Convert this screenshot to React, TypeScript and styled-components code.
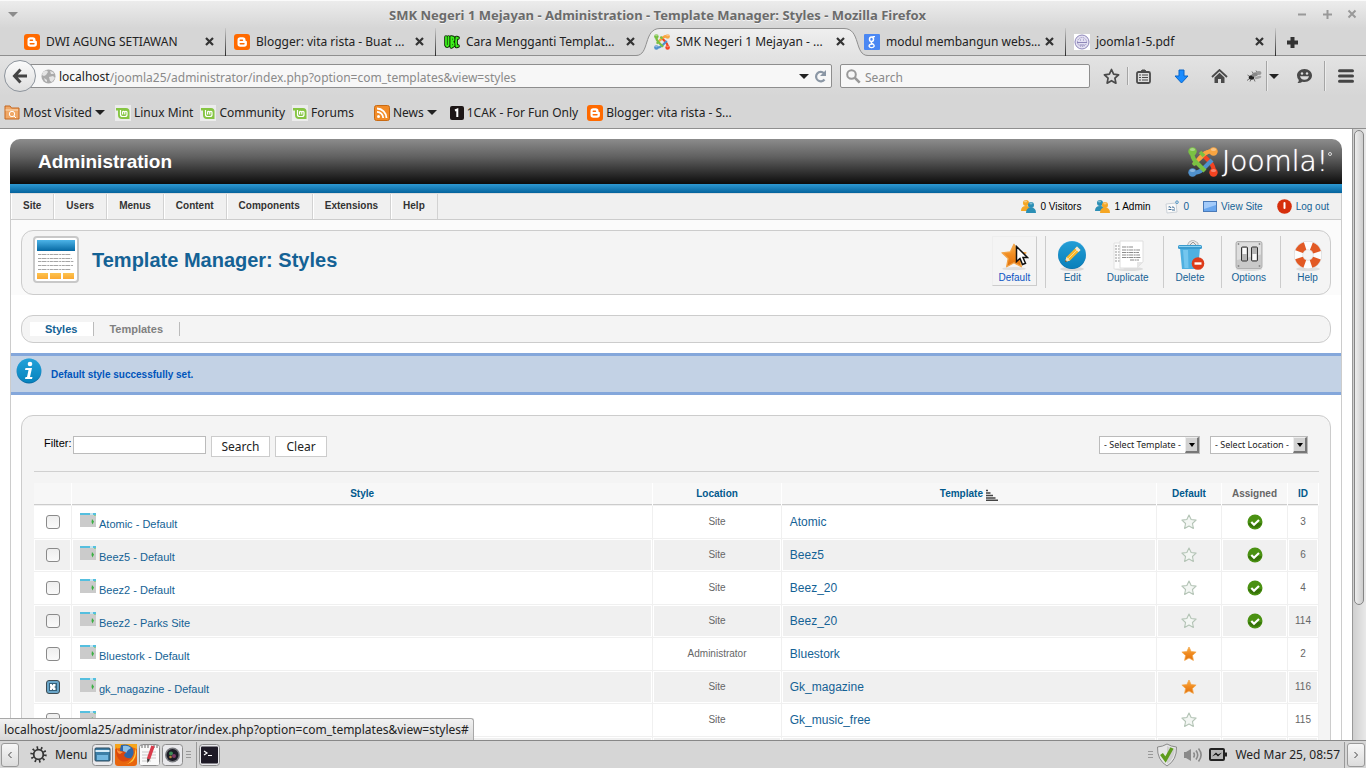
import React from 'react';
import styled, { createGlobalStyle, css } from 'styled-components';

const ui = '"Noto Sans", "Open Sans", sans-serif';
const web = '"Liberation Sans", Arial, sans-serif';

const Global = createGlobalStyle`
  * { box-sizing: border-box; }
  html, body { margin: 0; padding: 0; background: #d6d6d6; }
  a { text-decoration: none; color: inherit; }
  button, input, select { font: inherit; color: inherit; margin: 0; }
  button { background: none; border: 0; padding: 0; }
  svg { display: block; flex: none; }
`;

/* ---------- Window chrome ---------- */

const Desktop = styled.div`
  display: flex;
  flex-direction: column;
  height: 100vh;
  overflow: hidden;
  font-family: ${ui};
  font-size: 12px;
  line-height: 18px;
  color: #222;
`;

const TitleBar = styled.header`
  display: flex;
  align-items: center;
  height: 28px;
  padding: 0 8px;
  background: linear-gradient(#ececec, #d6d6d6);
  border-top: 1px solid #fafafa;
  color: #6b6b6b;
`;

const WindowTitle = styled.h1`
  flex: 1;
  margin: 0;
  font-size: 13px;
  line-height: 20px;
  font-weight: 700;
  text-align: center;
  text-shadow: 0 1px 0 #f4f4f4;
`;

const WindowButtons = styled.div`
  display: flex;
  gap: 14px;
`;

const TabStrip = styled.nav`
  display: flex;
  height: 28px;
  padding-left: 16px;
  background: #d6d6d6;
  box-shadow: inset 0 -1px 0 #8f8f8f;
`;

const TabBox = styled.div<{ $line?: boolean }>`
  position: relative;
  display: flex;
  align-items: center;
  gap: 6px;
  width: 210px;
  padding: 0 11px 1px 8px;
  ${p => p.$line && css`
    border-right: 1px solid;
    border-image: linear-gradient(#d0d0d0, #222) 1;
  `}
`;

const TabShape = styled.svg`
  position: absolute;
  top: 0;
  left: -10px;
`;

const TabLink = styled.a`
  position: relative;
  display: flex;
  align-items: center;
  gap: 6px;
  flex: 1;
  min-width: 0;
  white-space: nowrap;
`;

const CloseButton = styled.button`
  position: relative;
  display: flex;
`;

const NewTab = styled.button`
  display: flex;
  align-items: center;
  padding-left: 11px;
`;

const NavBar = styled.div`
  display: flex;
  align-items: center;
  height: 40px;
  padding: 0 12px 0 4px;
  background: linear-gradient(#e3e3e3, #d6d6d6);
`;

const BackButton = styled.button`
  position: relative;
  z-index: 1;
  display: flex;
  align-items: center;
  justify-content: center;
  flex: none;
  width: 32px;
  height: 32px;
  border: 1px solid #8d949c;
  border-radius: 50%;
  background: linear-gradient(#fbfbfb, #dedede);
`;

const UrlField = styled.div`
  display: flex;
  align-items: center;
  flex: 1;
  height: 24px;
  margin-left: -16px;
  padding: 0 4px 0 20px;
  border: 1px solid #8e8e8e;
  border-radius: 0 2px 2px 0;
  background: #f7f7f7;
`;

const Host = styled.label`
  margin-left: 3px;
  padding-top: 2px;
  color: #222;
`;

const BareInput = styled.input`
  flex: 1;
  min-width: 0;
  height: 20px;
  padding: 2px 0 0;
  border: 0;
  outline: 0;
  background: transparent;
  color: #8a8a8a;
  &::placeholder { color: #8a8a8a; opacity: 1; }
`;

const SearchField = styled.label`
  display: flex;
  align-items: center;
  gap: 4px;
  width: 250px;
  height: 24px;
  margin: 0 13px 0 8px;
  padding: 0 5px;
  border: 1px solid #8e8e8e;
  border-radius: 2px;
  background: #f7f7f7;
`;

const NavTools = styled.div`
  display: flex;
  align-items: center;
`;

const ToolButton = styled.button<{ $gap?: number }>`
  display: flex;
  justify-content: center;
  margin-left: ${p => p.$gap ?? 0}px;
`;

const ToolLine = styled.i<{ $tall?: boolean; $gap: number }>`
  width: 1px;
  height: ${p => (p.$tall ? 30 : 18)}px;
  margin-left: ${p => p.$gap}px;
  background: #a5a5a5;
  box-shadow: 1px 0 0 #ececec;
`;

const Bookmarks = styled.nav`
  display: flex;
  align-items: center;
  height: 33px;
  padding: 1px 4px 0;
  background: #d6d6d6;
  border-bottom: 1px solid #8f8f8f;
`;

const Bookmark = styled.a<{ $before?: number }>`
  display: flex;
  align-items: center;
  gap: 3px;
  margin-left: ${p => p.$before ?? 0}px;
  white-space: nowrap;
`;

const Caret = styled.i<{ $dim?: boolean }>`
  border: solid transparent;
  border-width: 5px 5px 0;
  border-top-color: ${p => (p.$dim ? '#8c8c8c' : '#222')};
`;

/* ---------- Web page ---------- */

const Viewport = styled.div`
  position: relative;
  display: flex;
  flex: 1;
  min-height: 0;
  overflow: hidden;
  background: #fff;
`;

const Document = styled.main`
  flex: 1;
  min-width: 0;
  padding: 10px 10px 0;
  font-family: ${web};
  font-size: 11px;
  line-height: 14px;
`;

const Scrollbar = styled.div`
  width: 14px;
  padding: 1px 1px;
  border-left: 1px solid #999;
  background: linear-gradient(90deg, #cfcfcf, #e9e9e9);
`;

const Thumb = styled.div`
  width: 10px;
  height: 78%;
  border: 1px solid #858585;
  border-radius: 5px;
  background: linear-gradient(90deg, #ececec, #cdcdcd);
`;

const Banner = styled.header`
  display: flex;
  align-items: center;
  justify-content: space-between;
  height: 45px;
  padding: 0 10px 0 28px;
  border-radius: 10px 10px 0 0;
  background: linear-gradient(#8c8c8c, #606060 40%, #0c0c0c);
`;

const BlueStripe = styled.div`
  height: 9px;
  background: linear-gradient(#2d98d2, #04639d);
`;

const SiteName = styled.h2`
  margin: 0;
  color: #fff;
  font-size: 19px;
  line-height: 24px;
`;

const Brand = styled.div`
  display: flex;
  align-items: center;
  gap: 4px;
  color: #fff;
  font-family: "DejaVu Sans Light", "DejaVu Sans", sans-serif;
  font-weight: 200;
  font-size: 28px;
  line-height: 30px;
  text-shadow: 0 0 1px #fff;
`;

const Registered = styled.i`
  width: 4px;
  height: 4px;
  margin: -16px 0 0 -4px;
  border: 1px solid #ddd;
  border-radius: 50%;
`;

const Frame = styled.div`
  border: solid #ccc;
  border-width: 0 1px;
`;

const MenuRow = styled.div`
  display: flex;
  justify-content: space-between;
  height: 27px;
  padding-right: 12px;
  border-top: 1px solid #ddd;
  border-bottom: 1px solid #ccc;
  background: #f0f0f0;
`;

const MainMenu = styled.nav`
  display: flex;
`;

const MenuItem = styled.a`
  display: flex;
  align-items: center;
  padding: 0 12px 2px 11px;
  border-left: 1px solid #fff;
  border-right: 1px solid #d2d2d2;
  color: #333;
  font-size: 10px;
  font-weight: 700;
`;

const Status = styled.div`
  display: flex;
  align-items: center;
  gap: 14px;
  color: #000;
  font-size: 10px;
`;

const StatusItem = styled.span`
  display: flex;
  align-items: center;
  gap: 4px;
  a { color: #146295; }
`;

const TitleZone = styled.section`
  padding: 10px 10px 0;
  background: #fbfbfb;
`;

const Panel = styled.section`
  border: 1px solid #ccc;
  border-radius: 12px;
  background: #f4f4f4;
`;

const TitlePanel = styled(Panel)`
  display: flex;
  justify-content: space-between;
  height: 65px;
  padding: 5px 0 0 11px;
`;

const PageTitle = styled.h2`
  display: flex;
  gap: 13px;
  margin: 0;
  color: #146295;
  font-size: 20px;
  line-height: 48px;
`;

const Toolbar = styled.div`
  display: flex;
`;

const ToolGroup = styled.div`
  display: flex;
  gap: 6px;
  height: 52px;
  padding: 0 8px 0 4px;
  border-right: 1px solid #ccc;
  &:last-child { padding-right: 0; border-right: 0; }
`;

const Action = styled.a<{ $hover?: boolean }>`
  position: relative;
  display: flex;
  flex-direction: column;
  align-items: center;
  min-width: 45px;
  height: 50px;
  padding: 3px 5px 0;
  border: 1px solid transparent;
  color: #146295;
  font-size: 10px;
  line-height: 12px;
  ${p => p.$hover && css`
    border-color: #eee #ccc #ccc #eee;
    color: #0b55c4;
  `}
`;

const Pointer = styled.svg`
  position: absolute;
  left: 22px;
  top: 8px;
`;

const SubMenu = styled(Panel)`
  display: flex;
  align-items: center;
  height: 28px;
  margin: 20px 10px 10px;
  padding-left: 8px;
`;

const SubItem = styled.a<{ $on?: boolean }>`
  padding: 0 16px 0 15px;
  border-right: 1px solid #bbb;
  color: ${p => (p.$on ? '#146295' : '#808080')};
  background: ${p => (p.$on ? '#fff' : 'transparent')};
  font-weight: 700;
`;

const Message = styled.section`
  display: flex;
  gap: 9px;
  height: 42px;
  padding: 2px 5px 0;
  border: solid #84a7db;
  border-width: 3px 0;
  background: #c3d2e5;
  color: #05b;
  font-size: 10px;
  font-weight: 700;
  line-height: 34px;
`;

const ListPanel = styled(Panel)`
  margin: 20px 10px 0;
  padding: 20px 11px 40px 12px;
`;

const Filters = styled.form`
  display: flex;
  align-items: flex-start;
  height: 36px;
  margin-bottom: 11px;
  padding: 0 11px 0 10px;
  border-bottom: 1px solid #d0d0d0;
  color: #000;
`;

const FilterInput = styled.input`
  width: 133px;
  height: 18px;
  margin: 0 5px 0 1px;
  padding: 0 3px;
  border: 1px solid #bbb;
  background: #fff;
`;

const FilterButton = styled.button`
  height: 21px;
  margin-right: 5px;
  padding: 0 10px;
  border: 1px solid #ccc;
  background: #fff;
  color: #222;
  font-family: ${ui};
  font-size: 12px;
  line-height: 18px;
`;

const SelectGroup = styled.div`
  display: flex;
  gap: 10px;
  margin-left: auto;
`;

const SelectBox = styled.label`
  position: relative;
  display: flex;
  border: 1px solid #bbb;
  background: #fff;
`;

const Select = styled.select`
  appearance: none;
  height: 16px;
  padding: 0 18px 0 4px;
  border: 0;
  background: transparent;
  color: #222;
  font-family: ${ui};
  font-size: 9px;
  line-height: 14px;
`;

const SelectArrow = styled.i`
  position: absolute;
  top: 0;
  right: 0;
  display: flex;
  align-items: center;
  justify-content: center;
  width: 14px;
  height: 16px;
  border: 1px solid;
  border-width: 1px 2px 2px 1px;
  border-color: #eee #777 #777 #eee;
  background: #d2d2d2;
  pointer-events: none;
  &::after {
    content: '';
    border: solid transparent;
    border-width: 4px 3px 0;
    border-top-color: #000;
  }
`;

const Grid = styled.table`
  width: 100%;
  table-layout: fixed;
  border-collapse: separate;
  border-spacing: 0;
`;

const Head = styled.th<{ $plain?: boolean }>`
  height: 23px;
  padding: 0;
  border-right: 1px solid #fff;
  border-bottom: 1px solid #f0f0f0;
  background: #f7f7f7;
  box-shadow: inset 0 -1px 0 #ccc;
  color: ${p => (p.$plain ? '#666' : '#025a8d')};
  font-size: 10px;
  svg { display: inline-block; vertical-align: -4px; margin-left: 3px; }
`;

const Row = styled.tr`
  background: #fff;
  &:nth-child(even) { background: #f0f0f0; }
`;

const Cell = styled.td<{ $left?: boolean; $big?: boolean }>`
  height: 33px;
  padding: ${p => (p.$left ? '0 8px' : '0')};
  border-right: 1px solid #f0f0f0;
  border-bottom: 1px solid #f0f0f0;
  box-shadow: inset 0 0 0 1px #fff;
  color: #666;
  font-size: ${p => (p.$big ? 12 : 10)}px;
  text-align: ${p => (p.$left ? 'left' : 'center')};
  a { color: #146295; }
  svg { margin: 0 auto; }
`;

const StyleName = styled.div`
  display: flex;
  align-items: flex-start;
  gap: 3px;
  height: 18px;
  font-size: 11px;
  a { margin-top: 4px; }
  svg { margin: 0; }
`;

const Check = styled.input`
  position: relative;
  display: block;
  appearance: none;
  width: 14px;
  height: 14px;
  margin: 0 auto;
  border: 1px solid #8a8a8a;
  border-radius: 3px;
  background: linear-gradient(#eee, #fafafa);
  &:checked {
    border-color: #3e4b52;
    background: #69a5c8;
  }
  &:checked::before {
    content: '';
    position: absolute;
    inset: 2px;
    background: #34607a;
  }
  &:checked::after {
    content: '';
    position: absolute;
    inset: 3px;
    background: #fff;
    clip-path: polygon(0 0, 38% 0, 50% 25%, 62% 0, 100% 0, 100% 38%, 75% 50%, 100% 62%, 100% 100%, 62% 100%, 50% 75%, 38% 100%, 0 100%, 0 62%, 25% 50%, 0 38%);
  }
`;

const LinkHint = styled.div`
  position: absolute;
  left: 0;
  bottom: 0;
  height: 22px;
  padding: 1px 4px 0;
  border: solid #a8a8a8;
  border-width: 1px 1px 0 0;
  border-radius: 0 3px 0 0;
  background: linear-gradient(#f2f2f2, #d8d8d8);
  line-height: 20px;
`;

/* ---------- Desktop panel ---------- */

const TaskBar = styled.footer`
  display: flex;
  align-items: center;
  justify-content: space-between;
  height: 28px;
  padding: 0 1px;
  border-top: 1px solid #888;
  background: #d6d6d6;
`;

const TaskSide = styled.div`
  display: flex;
  align-items: center;
`;

const Tray = styled.div`
  display: flex;
  align-items: center;
  gap: 6px;
`;

const HideButton = styled.button`
  display: flex;
  align-items: center;
  justify-content: center;
  width: 18px;
  height: 24px;
  border: 1px solid #999;
  border-radius: 3px;
  background: linear-gradient(#f6f6f6, #dcdcdc);
`;

const MenuButton = styled.button`
  display: flex;
  align-items: center;
  gap: 8px;
  margin: 0 5px 0 11px;
`;

const Launcher = styled.button`
  display: flex;
  margin-right: 2px;
`;

const Grip = styled.i`
  width: 5px;
  height: 8px;
  margin: 0 3px 0 1px;
  background: repeating-linear-gradient(#999 0 1px, transparent 1px 3px);
`;

const PanelLine = styled.i`
  width: 1px;
  height: 26px;
  margin: 0 2px;
  background: #999;
`;

const Clock = styled.time`
  margin: 0 2px;
`;

/* ---------- Icons ---------- */

const BloggerIcon = () => (
  <svg width="16" height="16" viewBox="0 0 16 16">
    <rect width="16" height="16" rx="3" fill="#ff6a00" />
    <path d="M3.500 6A2.700 2.700 0 0 1 6.200 3.300h2.600A2.700 2.700 0 0 1 11.500 6c0 .8.3 1 .8 1 .4 0 .6.3.6.7V10a2.700 2.700 0 0 1-2.700 2.700h-4A2.700 2.700 0 0 1 3.500 10z" fill="#fff" />
    <path d="M6.200 6.200h2.300M6.200 9.700h3.800" stroke="#ff6a00" strokeWidth="1.400" strokeLinecap="round" />
  </svg>
);

const UbcIcon = () => (
  <svg width="16" height="16" viewBox="0 0 16 16" fill="none" strokeLinejoin="round" strokeLinecap="round">
    <g stroke="#0a2a00" strokeWidth="3.600"><path d="M2 3v8q1 2.500 2.500 0V3M7.300 3v10l2.300-1.500V9.500L8 8l1.600-2-.3-2.500zM14 4l-1.500-.5-.5 4.500.5 4.500 1.500-.5" /></g>
    <g stroke="#3df01c" strokeWidth="1.800"><path d="M2 3v8q1 2.500 2.500 0V3M7.300 3v10l2.300-1.500V9.500L8 8l1.600-2-.3-2.500zM14 4l-1.500-.5-.5 4.500.5 4.500 1.500-.5" /></g>
  </svg>
);

const JoomlaMark = ({ size }: { size: number }) => (
  <svg width={size} height={size} viewBox="0 0 30 30" fill="none" strokeWidth="4.200">
    <path d="M26 4Q19 4 15 8L6 17" stroke="#f9a541" />
    <path d="M26 26Q26 19 22 15L13 6" stroke="#f44321" />
    <path d="M4 26Q11 26 15 22L24 13" stroke="#5091cd" />
    <path d="M4 4Q4 11 8 15L17 24" stroke="#7ac143" />
    <path d="M26 4Q19 4 15 8L11 12" stroke="#f9a541" />
    <path d="m5 18 4-4M12 5l4 4" stroke="#7ac143" strokeWidth="3.600" />
    <g stroke="none">
      <circle cx="4.500" cy="4.500" r="4.200" fill="#7ac143" /><circle cx="25.500" cy="4.500" r="4.200" fill="#f9a541" />
      <circle cx="25.500" cy="25.500" r="4.200" fill="#f44321" /><circle cx="4.500" cy="25.500" r="4.200" fill="#5091cd" />
      <g fill="#fff" opacity=".35"><ellipse cx="4.500" cy="2.600" rx="2.600" ry="1.500" /><ellipse cx="25.500" cy="2.600" rx="2.600" ry="1.500" /><ellipse cx="25.500" cy="23.600" rx="2.600" ry="1.500" /><ellipse cx="4.500" cy="23.600" rx="2.600" ry="1.500" /></g>
    </g>
  </svg>
);

const GoogleIcon = () => (
  <svg width="16" height="16" viewBox="0 0 16 16" fill="none" stroke="#fff">
    <rect width="16" height="16" rx="1" fill="#4a87f3" stroke="none" />
    <ellipse cx="7.500" cy="5.200" rx="2" ry="2.300" strokeWidth="1.500" />
    <path d="M8.500 2.700H11M9 7Q6 8.500 8 9.300T10.300 12Q9.500 13.800 7.500 13.700T5 12Q5.300 10 8.500 10" strokeWidth="1.300" />
  </svg>
);

const SealIcon = () => (
  <svg width="16" height="16" viewBox="0 0 16 16" fill="none" stroke="#8d86b8">
    <rect width="16" height="16" fill="#fff" stroke="none" />
    <circle cx="8" cy="8" r="7" fill="#e4e1f2" />
    <circle cx="8" cy="8" r="4.500" strokeDasharray="1 1" />
    <path d="M3 8.500h10M6 6h1M9 6h1M5.500 11h5" />
  </svg>
);

const CloseIcon = () => (
  <svg width="9" height="9" viewBox="0 0 9 9" stroke="#333" strokeWidth="2.200"><path d="m1 1 7 7M8 1 1 8" /></svg>
);

const BackIcon = () => (
  <svg width="16" height="16" viewBox="0 0 16 16" fill="none" stroke="#444" strokeWidth="3"><path d="M8.500 1.500 2.500 8l6 6.500M3 8h12" /></svg>
);

const GlobeIcon = () => (
  <svg width="15" height="15" viewBox="0 0 15 15">
    <circle cx="7.500" cy="7.500" r="7" fill="#aaa" />
    <path d="M2 3q4-3 5 0L5 6 3 7 1 6zM8 8l4-1 2 2-3 4-2-1zM9 2l3 1 1 2-3 0zM3 9l3 2v2l-2-1z" fill="#e4e4e4" />
  </svg>
);

const ReloadIcon = () => (
  <svg width="13" height="13" viewBox="0 0 13 13" fill="none" stroke="#8b97a5" strokeWidth="2.200">
    <path d="M10.500 9.500A4.700 4.700 0 1 1 10 3.200" /><path d="M12 0v6H6z" fill="#8b97a5" stroke="none" />
  </svg>
);

const MagnifierIcon = () => (
  <svg width="15" height="15" viewBox="0 0 15 15" fill="none" stroke="#999" strokeWidth="2">
    <circle cx="5.500" cy="5.500" r="4.300" /><path d="m8.700 8.700 5 5" strokeWidth="2.600" />
  </svg>
);

const StarOutline = () => (
  <svg width="17" height="17" viewBox="0 0 17 17" fill="none" stroke="#4a4a4a" strokeWidth="1.700" strokeLinejoin="round">
    <path d="m8.500 1.500 2.100 4.700 5 .6-3.700 3.400 1 5-4.400-2.500-4.400 2.500 1-5L1.400 6.800l5-.6z" />
  </svg>
);

const ClipboardIcon = () => (
  <svg width="15" height="15" viewBox="0 0 15 15" fill="none" stroke="#4a4a4a" strokeWidth="1.800">
    <rect x="1" y="3" width="13" height="11" rx="1.500" />
    <path d="M4.500 3 6 1h3l1.500 2" fill="#4a4a4a" strokeWidth="1" />
    <path d="M3 6h2M3 8.500h2M3 11h2M6 6h6M6 8.500h6M6 11h6" strokeWidth="1.200" />
  </svg>
);

const DownloadIcon = () => (
  <svg width="15" height="15" viewBox="0 0 15 15"><path d="M5 1h5v6h4l-6.500 7L1 7h4z" fill="#1a8cff" stroke="#0865c8" /></svg>
);

const HomeIcon = () => (
  <svg width="17" height="15" viewBox="0 0 17 15" fill="#4a4a4a">
    <path d="m1 8 7.500-7L16 8" fill="none" stroke="#4a4a4a" strokeWidth="1.800" />
    <path d="m3.500 8.500 5-4.700 5 4.700V14h-3.500v-4H7v4H3.500z" />
  </svg>
);

const FlyIcon = () => (
  <svg width="17" height="14" viewBox="0 0 17 14" fill="none" stroke="#555">
    <ellipse cx="5.500" cy="8.500" rx="2.700" ry="2.200" fill="#222" stroke="none" />
    <ellipse cx="9" cy="5.500" rx="3.500" ry="2" fill="#888" stroke="none" transform="rotate(-20 9 5.500)" />
    <ellipse cx="13" cy="4" rx="2.500" ry="2" fill="#999" stroke="none" />
    <ellipse cx="12" cy="8.500" rx="3.500" ry="1.300" fill="#a6a6a6" stroke="none" transform="rotate(-15 12 8.500)" />
    <path d="M3 7 1.500 6M3 10l-2 1.500M5 10.500l-1 2M8 10l1 2.500M7 4 6 2.500M11 3l-1-1.500" strokeWidth=".8" />
  </svg>
);

const SmileIcon = () => (
  <svg width="17" height="16" viewBox="0 0 17 16">
    <path d="M8.500 1C13 1 16 4 16 7.500S13 14 8.500 14q-1 0-2-.3Q4 15.500 1.500 15q1.500-1.300 1.300-3Q1 10 1 7.500C1 4 4 1 8.500 1z" fill="#4a4a4a" />
    <circle cx="6" cy="5.500" r="1.200" fill="#ddd" /><circle cx="11" cy="5.500" r="1.200" fill="#ddd" />
    <path d="M4 8.300h9q-1 3.500-4.500 3.500T4 8.300z" fill="#ddd" />
  </svg>
);

const HamburgerIcon = () => (
  <svg width="16" height="14" viewBox="0 0 16 14" stroke="#444" strokeWidth="3" strokeLinecap="round"><path d="M1.500 1.800h13M1.500 7h13M1.500 12.200h13" /></svg>
);

const FolderIcon = () => (
  <svg width="16" height="15" viewBox="0 0 16 15" fill="none" stroke="#c4661f">
    <path d="M1 14V1h5l1.500 2H15v11z" fill="#f0a868" />
    <path d="M1.500 5H14" stroke="#fbe0c0" />
    <circle cx="8" cy="9" r="2.700" stroke="#fff" /><path d="m10 11 2 2" stroke="#fff" />
  </svg>
);

const MintIcon = () => (
  <svg width="16" height="16" viewBox="0 0 16 16" fill="none">
    <rect width="16" height="16" fill="#ececec" />
    <path d="M1 3h10q3.500 0 3.500 3.500V14H7q-4 0-4-4V5.500H1z" fill="#86c543" />
    <path d="M5.500 5v4.500q0 2 2 2H10q2 0 2-2V7.300q0-1-1.100-1t-1.100 1V9.500M9.800 7.300q0-1-1.100-1t-1.100 1V9.500" stroke="#fff" strokeWidth="1.200" />
  </svg>
);

const RssIcon = () => (
  <svg width="16" height="16" viewBox="0 0 16 16" fill="none" stroke="#fff" strokeWidth="1.800">
    <rect x=".5" y=".5" width="15" height="15" rx="2" fill="#f28c28" stroke="#c96a12" strokeWidth="1" />
    <circle cx="4.500" cy="11.500" r="1.500" fill="#fff" stroke="none" />
    <path d="M3 6.800A6.200 6.200 0 0 1 9.200 13M3 3.500A9.500 9.500 0 0 1 12.500 13" />
  </svg>
);

const OneIcon = () => (
  <svg width="14" height="14" viewBox="0 0 14 14" fill="none">
    <rect width="14" height="14" rx="2" fill="#1d1616" /><path d="M5 4.500 7.300 3.500V11" stroke="#fff" strokeWidth="2" />
  </svg>
);

const PeopleIcon = ({ back, front }: { back: string; front: string }) => (
  <svg width="15" height="15" viewBox="0 0 15 15">
    <g fill={back}><circle cx="5" cy="4" r="3" /><path d="M0 12q0-5 5-5t4 5z" /></g>
    <g fill={front}><circle cx="10" cy="6" r="3" /><path d="M5 14q0-5.500 5-5.500t5 5.500z" /></g>
    <g fill="#fff" opacity=".4"><ellipse cx="10" cy="4.500" rx="1.600" ry="1" /><ellipse cx="4.500" cy="2.500" rx="1.600" ry="1" /></g>
  </svg>
);

const MailIcon = () => (
  <svg width="15" height="14" viewBox="0 0 15 14" fill="none">
    <path d="m1 4 10-1 1 9-10 1z" fill="#fafafa" stroke="#ccd2d8" />
    <path d="M3.500 7q2-1 2.500 1M3.500 9.500h3M7 7q2-.5 2.500 1.500M7 10h3" stroke="#3b6a94" />
    <circle cx="12" cy="2.200" r="1.300" stroke="#4f94c4" />
  </svg>
);

const ScreenIcon = () => (
  <svg width="14" height="11" viewBox="0 0 14 11">
    <rect x=".5" y=".5" width="13" height="10" fill="#6aa7ee" stroke="#4a7ab8" />
    <path d="M1 1h12v3L1 8z" fill="#a3cbfa" />
  </svg>
);

const PowerIcon = () => (
  <svg width="15" height="15" viewBox="0 0 15 15"><circle cx="7.500" cy="7.500" r="7.300" fill="#d62f0c" /><path d="M7.500 4v5" stroke="#fff" strokeWidth="2" strokeLinecap="round" /></svg>
);

const LayoutIcon = () => (
  <svg width="46" height="47" viewBox="0 0 46 47">
    <defs>
      <linearGradient id="sky" x2="0" y2="1"><stop stopColor="#4db4e8" /><stop offset="1" stopColor="#0568a2" /></linearGradient>
      <linearGradient id="sun" x2="0" y2="1"><stop stopColor="#fdc34f" /><stop offset="1" stopColor="#fba932" /></linearGradient>
    </defs>
    <rect x="1" y="1" width="44" height="45" rx="3" fill="#fff" stroke="#c8c8c8" strokeWidth="2" />
    <rect x="4" y="4" width="38" height="11" fill="url(#sky)" />
    <g stroke="#a5a5a5" strokeDasharray="3 .5 5 .8 2 .6">
      <path d="M5 18.500h33M5 22.500h34M5 25.500h36M5 29.500h35M5 33.500h33" />
    </g>
    <g fill="url(#sun)"><rect x="4" y="37" width="11" height="6" /><rect x="17" y="37" width="11" height="6" /><rect x="30" y="37" width="11" height="6" /></g>
  </svg>
);

const star = 'm16 2 4.300 9 9.900 1.200-7.300 6.800 1.900 9.800L16 24l-8.800 4.800 1.900-9.800-7.300-6.800L11.700 11z';

const GoldStar = ({ size, inset = 0 }: { size: number; inset?: number }) => (
  <svg width={size} height={size} viewBox={`${-inset} ${-inset} ${32 + 2 * inset} ${32 + 2 * inset}`}>
    <defs><linearGradient id="gold" x2="0" y2="1"><stop stopColor="#f9b04d" /><stop offset=".5" stopColor="#f08a1f" /><stop offset="1" stopColor="#e0700c" /></linearGradient></defs>
    {inset > 0 && <ellipse cx="16" cy="31" rx="14" ry="2" fill="#dedede" />}
    <path d={star} fill="url(#gold)" stroke="#f3a548" strokeWidth="1.500" strokeLinejoin="round" />
  </svg>
);

const PaleStar = () => (
  <svg width="16" height="16" viewBox="0 0 32 32"><path d={star} fill="#f3f6f3" stroke="#b4c4b6" strokeWidth="2.200" strokeLinejoin="round" /></svg>
);

const EditIcon = () => (
  <svg width="32" height="32" viewBox="0 0 32 32">
    <ellipse cx="16" cy="29" rx="12" ry="2" fill="#d9d9d9" />
    <circle cx="16" cy="15" r="14" fill="url(#sky)" /><circle cx="16" cy="15" r="13.500" fill="#0a8fc9" opacity=".6" />
    <path d="m9 22 1.500-5L21 6.500l3.500 3.500L14 20.500z" fill="#f7b52c" />
    <path d="m19 8.500 2-2 3.500 3.500-2 2z" fill="#f2ebe0" /><path d="m9 22 1.500-5 3.500 3.500z" fill="#f8e3bb" /><path d="m12 19 9-9" stroke="#fde08a" />
    <path d="m9 22 .6-2 1.400 1.400z" fill="#333" />
  </svg>
);

const DuplicateIcon = () => (
  <svg width="32" height="32" viewBox="0 0 32 32">
    <ellipse cx="17" cy="29" rx="14" ry="2" fill="#dcdcdc" />
    <path d="M2 3h10v26H2z" fill="#fcfcfc" stroke="#e2e2e2" />
    <path d="M3 6h5M3 9h5M3 12h5M3 15h5M3 18h5M3 21h5" stroke="#999" strokeDasharray="2 1" />
    <path d="M8 1h23v21l-6 6H8z" fill="#fff" stroke="#dedede" />
    <path d="M10 7h11M10 10h18M10 12.500h17M10 15h18M10 17.500h19M18 20h9" stroke="#8b8b8b" strokeWidth="1.200" strokeDasharray="4 .6 2 .5" />
    <path d="m25 28 0-6h6z" fill="#e6e6e6" />
  </svg>
);

const DeleteIcon = () => (
  <svg width="32" height="32" viewBox="0 0 32 32">
    <path d="m6 8 2 21h16l2-21z" fill="#4fb0e0" /><path d="m9 10 1.500 18h4L14 10z" fill="#74c6ee" />
    <path d="M13 6q1-5 6-6l5 3v3z" fill="#e8e8e8" stroke="#aaa" strokeWidth=".8" /><path d="m16 5 3-3 3 3" fill="none" stroke="#999" />
    <rect x="4" y="5" width="24" height="4" rx="1.500" fill="#3a9ccf" /><path d="M5 6.500h22" stroke="#8fd3f2" />
    <circle cx="24" cy="23.500" r="6.300" fill="#dd3b1a" /><path d="M20.500 23.500h7" stroke="#fff" strokeWidth="2.400" />
  </svg>
);

const OptionsIcon = () => (
  <svg width="32" height="32" viewBox="0 0 32 32">
    <ellipse cx="16" cy="29" rx="13" ry="2" fill="#ddd" />
    <rect x="3" y="1.500" width="26" height="27" rx="2" fill="#c9c9c9" stroke="#b0b0b0" />
    <path d="M4 2.500h24v12L4 20z" fill="#dedede" />
    <g stroke="#333"><rect x="8.500" y="7" width="6" height="14" rx="1" fill="#b5b5b5" /><rect x="18.500" y="7" width="6" height="14" rx="1" fill="#b5b5b5" /></g>
    <path d="M9.500 8h4v6h-4zM19.500 14h4v6h-4z" fill="#fafafa" />
    <g fill="#888"><circle cx="5.500" cy="4" r=".9" /><circle cx="26.500" cy="4" r=".9" /><circle cx="5.500" cy="26" r=".9" /><circle cx="26.500" cy="26" r=".9" /></g>
  </svg>
);

const HelpIcon = () => (
  <svg width="32" height="32" viewBox="0 0 32 32" fill="none">
    <ellipse cx="16" cy="29" rx="12" ry="2" fill="#ddd" />
    <circle cx="16" cy="15" r="9.500" stroke="#d2d2d2" strokeWidth="9" />
    <circle cx="16" cy="15" r="9.500" stroke="#fdfdfd" strokeWidth="8" />
    <circle cx="16" cy="15" r="9.500" stroke="#e25a25" strokeWidth="8" strokeDasharray="8.500 6.423" strokeDashoffset="-3.200" />
  </svg>
);

const InfoIcon = () => (
  <svg width="26" height="26" viewBox="0 0 26 26">
    <circle cx="13" cy="13" r="12.500" fill="url(#sky)" /><circle cx="13" cy="12.500" r="12" fill="#0794cf" opacity=".6" />
    <circle cx="14" cy="6" r="2.300" fill="#fff" />
    <path d="M9.500 10h6.500l-2 9h2.500l-.5 2H9l.5-2H11l1.500-7H9z" fill="#fff" />
  </svg>
);

const ThemeIcon = () => (
  <svg width="16" height="14" viewBox="0 0 16 14">
    <rect y="2" width="16" height="12" fill="#cbcbcb" /><path d="M0 1h16" stroke="#55bfdf" strokeWidth="2" />
    <path d="M10 1h3" stroke="#bfe6f2" strokeWidth="2" /><path d="m12 6 2 2.500-1.500 3-1-2.500z" fill="#3cb043" /><path d="M14 2.500h2" stroke="#8fd08f" />
  </svg>
);

const TickIcon = () => (
  <svg width="16" height="16" viewBox="0 0 16 16" fill="none">
    <circle cx="8" cy="8" r="7.500" fill="#4a9112" /><path d="M1 9a7.500 7.500 0 0 0 14 0z" fill="#377309" />
    <path d="m4.300 8 2.700 2.700L12 6" stroke="#fff" strokeWidth="2.200" />
  </svg>
);

const SortIcon = () => (
  <svg width="12" height="12" viewBox="0 0 12 12" stroke="#444" strokeWidth="1.500">
    <path d="M0 1.500h2M0 4h4.500M0 6.500h7M0 9h9.500M0 11.200h12" />
  </svg>
);

const GearIcon = () => (
  <svg width="17" height="17" viewBox="0 0 17 17" fill="none" stroke="#333">
    <circle cx="8.500" cy="8.500" r="4.800" strokeWidth="1.800" />
    <circle cx="8.500" cy="8.500" r="6.800" strokeWidth="2.800" strokeDasharray="1.600 2.672" />
  </svg>
);

const tile = <rect x=".5" y=".5" width="20" height="21" rx="3" fill="#e9e9ec" stroke="#8d8d8d" />;

const FilesIcon = () => (
  <svg width="21" height="22" viewBox="0 0 21 22">{tile}<rect x="3" y="4" width="15" height="13" rx="1" fill="#3d7ea6" stroke="#2b4a5e" /><path d="M3.500 7h14" stroke="#d7ebf7" strokeWidth="2" /><rect x="5" y="11" width="11" height="5" fill="#72b6df" /></svg>
);

const FirefoxIcon = () => (
  <svg width="22" height="22" viewBox="0 0 22 22">
    <rect width="22" height="22" rx="3" fill="#e8650e" />
    <path d="M0 0h22v5L14 2 0 5z" fill="#f6a51c" />
    <path d="M6 1q8-2 12 4 2 6-3 10-5 1-8-2L5 6z" fill="#2f66a8" />
    <path d="M8 2q5-1 8 2l-3 2-2 3-3-2z" fill="#8fc3e8" />
    <path d="M1 3q1 4 5 4l5 1-2 3 1 2q4 2 6 1-4 5-10 3Q0 13 1 3z" fill="#d9480f" />
    <path d="M20 4q3 7-2 13-5 4-12 3 7 1 10-3 5-5 4-13z" fill="#ffc83a" />
    <path d="M2 2q-1 4 2 5l4 1-3 2Q1 9 2 2z" fill="#fb923c" />
  </svg>
);

const NotesIcon = () => (
  <svg width="21" height="22" viewBox="0 0 21 22">{tile}<rect x="1" y="2" width="19" height="19" rx="1" fill="#fafafa" /><path d="M3 1v3M6 1v3M9 1v3M15 1v3M18 1v3" stroke="#666" /><path d="M3 8h14M3 11h14M3 14h14M3 17h9" stroke="#c8c8c8" /><path d="M14 2 9.500 15" stroke="#d93a4a" strokeWidth="3.500" /><path d="m8 14.500 3 1L8.500 19z" fill="#333" /></svg>
);

const CameraIcon = () => (
  <svg width="21" height="22" viewBox="0 0 21 22">{tile}<circle cx="10.500" cy="11" r="7.500" fill="#77797d" /><circle cx="10.500" cy="11" r="6" fill="#1c1c26" /><circle cx="9" cy="9.500" r="2" fill="#3d8b57" /><circle cx="12" cy="12" r="2" fill="#7c3a66" /><circle cx="8.500" cy="13" r="1.300" fill="#b8863a" /></svg>
);

const TerminalIcon = () => (
  <svg width="21" height="22" viewBox="0 0 21 22" fill="none">{tile}<rect x="2" y="2.500" width="17" height="17" rx="1" fill="#1e1a26" /><path d="m5 7 3 2-3 2M9 11.500h4" stroke="#fff" strokeWidth="1.200" /></svg>
);

const ShieldIcon = () => (
  <svg width="22" height="24" viewBox="0 0 22 24" fill="none">
    <path d="M11 1q4 2.500 9.500 3Q21 17 11 23 1 17 1.500 4 7 3.500 11 1z" fill="#e6e6e6" stroke="#8a8a8a" />
    <path d="M11 3q3.500 2 7.800 2.500Q19 15.500 11 21z" fill="#cfcfcf" />
    <path d="m5.500 11 4 5.500L16 5" stroke="#5e9c1c" strokeWidth="3.500" />
  </svg>
);

const SpeakerIcon = () => (
  <svg width="19" height="16" viewBox="0 0 19 16" fill="none" stroke="#8a8a8a" strokeWidth="1.600">
    <path d="M0 5h2l5-3v12l-5-3H0z" fill="#8a8a8a" stroke="none" /><path d="M9.500 5.500q1.800 2.500 0 5M12 3.500q3.400 4.500 0 9M14.500 1.500q5.200 6.500 0 13" />
  </svg>
);

const BatteryIcon = () => (
  <svg width="18" height="13" viewBox="0 0 18 13"><rect x="1" y="1" width="14" height="11" rx="1" fill="#b5b5b5" stroke="#222" strokeWidth="2" /><path d="M16 4.500h2v4h-2z" fill="#222" /><path d="m3 8.500 4-4 2 2 4-2-4 4-2-2z" fill="#111" /></svg>
);

const Chevron = ({ d }: { d: string }) => (
  <svg width="6" height="8" viewBox="0 0 6 8" fill="none" stroke="#444"><path d={d} /></svg>
);

/* ---------- Data ---------- */

const tabs = [
  { title: 'DWI AGUNG SETIAWAN', icon: <BloggerIcon />, line: true },
  { title: 'Blogger: vita rista - Buat ...', icon: <BloggerIcon />, line: true },
  { title: 'Cara Mengganti Templat...', icon: <UbcIcon /> },
  { title: 'SMK Negeri 1 Mejayan - ...', icon: <JoomlaMark size={16} />, active: true },
  { title: 'modul membangun webs...', icon: <GoogleIcon />, line: true },
  { title: 'joomla1-5.pdf', icon: <SealIcon />, line: true },
];

const rows = [
  { id: '3', style: 'Atomic - Default', place: 'Site', template: 'Atomic', assigned: true },
  { id: '6', style: 'Beez5 - Default', place: 'Site', template: 'Beez5', assigned: true },
  { id: '4', style: 'Beez2 - Default', place: 'Site', template: 'Beez_20', assigned: true },
  { id: '114', style: 'Beez2 - Parks Site', place: 'Site', template: 'Beez_20', assigned: true },
  { id: '2', style: 'Bluestork - Default', place: 'Administrator', template: 'Bluestork', gold: true },
  { id: '116', style: 'gk_magazine - Default', place: 'Site', template: 'Gk_magazine', gold: true, checked: true },
  { id: '115', style: '', place: 'Site', template: 'Gk_music_free' },
];

const menu = ['Site', 'Users', 'Menus', 'Content', 'Components', 'Extensions', 'Help'];

const windowActions = [
  { label: 'Minimize', d: 'M1 5.500h8' },
  { label: 'Maximize', d: 'M1 5.500h9M5.500 1v9' },
  { label: 'Close window', d: 'm1.500 1.500 7 7M8.500 1.500l-7 7' },
];

export default function App() {
  return (
    <Desktop>
      <Global />
      <TitleBar>
        <Caret $dim />
        <WindowTitle>SMK Negeri 1 Mejayan - Administration - Template Manager: Styles - Mozilla Firefox</WindowTitle>
        <WindowButtons>
          {windowActions.map(a => (
            <button key={a.label} aria-label={a.label}>
              <svg width="11" height="11" viewBox="0 0 11 11" stroke="#999" strokeWidth="2"><path d={a.d} /></svg>
            </button>
          ))}
        </WindowButtons>
      </TitleBar>

      <TabStrip>
        {tabs.map(t => (
          <TabBox key={t.title} $line={t.line}>
            {t.active && (
              <TabShape width="232" height="28" viewBox="0 0 232 28">
                <defs><linearGradient id="tabFill" x2="0" y2="1"><stop stopColor="#efefef" /><stop offset="1" stopColor="#e3e3e3" /></linearGradient></defs>
                <path d="M0 28v-.5C14 27.500 7 .5 24 .5h184C225 .5 218 27.500 232 27.500v.5z" fill="url(#tabFill)" />
                <path d="M0 27.500C14 27.500 7 .5 24 .5h184C225 .5 218 27.500 232 27.500" fill="none" stroke="#8f8f8f" />
              </TabShape>
            )}
            <TabLink href="#">{t.icon}{t.title}</TabLink>
            <CloseButton aria-label="Close tab"><CloseIcon /></CloseButton>
          </TabBox>
        ))}
        <NewTab aria-label="New tab">
          <svg width="11" height="11" viewBox="0 0 11 11" stroke="#333" strokeWidth="4"><path d="M0 5.500h11M5.500 0v11" /></svg>
        </NewTab>
      </TabStrip>

      <NavBar>
        <BackButton aria-label="Back"><BackIcon /></BackButton>
        <UrlField>
          <GlobeIcon />
          <Host htmlFor="url">localhost</Host>
          <BareInput id="url" defaultValue="/joomla25/administrator/index.php?option=com_templates&view=styles" />
          <Caret />
          <ToolButton aria-label="Reload" $gap={5}><ReloadIcon /></ToolButton>
        </UrlField>
        <SearchField>
          <MagnifierIcon />
          <BareInput placeholder="Search" aria-label="Search the web" />
        </SearchField>
        <NavTools>
          <ToolButton aria-label="Bookmark page"><StarOutline /></ToolButton>
          <ToolLine $gap={7} />
          <ToolButton aria-label="Bookmarks" $gap={8}><ClipboardIcon /></ToolButton>
          <ToolButton aria-label="Downloads" $gap={23}><DownloadIcon /></ToolButton>
          <ToolButton aria-label="Home" $gap={22}><HomeIcon /></ToolButton>
          <ToolButton aria-label="Firebug" $gap={18}><FlyIcon /></ToolButton>
          <ToolLine $tall $gap={3} />
          <ToolButton aria-label="Firebug menu" $gap={2}><Caret /></ToolButton>
          <ToolButton aria-label="Chat" $gap={17}><SmileIcon /></ToolButton>
          <ToolLine $tall $gap={11} />
          <ToolButton aria-label="Open menu" $gap={13}><HamburgerIcon /></ToolButton>
        </NavTools>
      </NavBar>

      <Bookmarks>
        <Bookmark href="#"><FolderIcon />Most Visited<Caret /></Bookmark>
        <Bookmark href="#" $before={10}><MintIcon />Linux Mint</Bookmark>
        <Bookmark href="#" $before={7}><MintIcon />Community</Bookmark>
        <Bookmark href="#" $before={7}><MintIcon />Forums</Bookmark>
        <Bookmark href="#" $before={20}><RssIcon />News<Caret /></Bookmark>
        <Bookmark href="#" $before={13}><OneIcon />1CAK - For Fun Only</Bookmark>
        <Bookmark href="#" $before={9}><BloggerIcon />Blogger: vita rista - S...</Bookmark>
      </Bookmarks>

      <Viewport>
        <Document>
          <Banner>
            <SiteName>Administration</SiteName>
            <Brand><JoomlaMark size={30} /><span>Joomla!</span><Registered /></Brand>
          </Banner>
          <BlueStripe />
          <Frame>
            <MenuRow>
              <MainMenu>{menu.map(m => <MenuItem key={m} href="#">{m}</MenuItem>)}</MainMenu>
              <Status>
                <StatusItem><PeopleIcon back="#f5a623" front="#2b8fb5" />0 Visitors</StatusItem>
                <StatusItem><PeopleIcon back="#2b8fb5" front="#f5a623" />1 Admin</StatusItem>
                <StatusItem><MailIcon /><a href="#">0</a></StatusItem>
                <StatusItem><ScreenIcon /><a href="#">View Site</a></StatusItem>
                <StatusItem><PowerIcon /><a href="#">Log out</a></StatusItem>
              </Status>
            </MenuRow>

            <TitleZone>
              <TitlePanel>
                <PageTitle><LayoutIcon />Template Manager: Styles</PageTitle>
                <Toolbar>
                  <ToolGroup>
                    <Action href="#" $hover>
                      <GoldStar size={32} inset={3} />Default
                      <Pointer width="14" height="21" viewBox="0 0 14 21">
                        <path d="M1.500 1.500v15l3.500-3 2.500 6 3-1.200-2.500-5.800h4.500z" fill="#fff" stroke="#111" strokeWidth="1.500" />
                      </Pointer>
                    </Action>
                  </ToolGroup>
                  <ToolGroup>
                    <Action href="#"><EditIcon />Edit</Action>
                    <Action href="#"><DuplicateIcon />Duplicate</Action>
                  </ToolGroup>
                  <ToolGroup><Action href="#"><DeleteIcon />Delete</Action></ToolGroup>
                  <ToolGroup><Action href="#"><OptionsIcon />Options</Action></ToolGroup>
                  <ToolGroup><Action href="#"><HelpIcon />Help</Action></ToolGroup>
                </Toolbar>
              </TitlePanel>
            </TitleZone>

            <SubMenu as="nav">
              <SubItem href="#" $on>Styles</SubItem>
              <SubItem href="#">Templates</SubItem>
            </SubMenu>

            <Message role="status"><InfoIcon />Default style successfully set.</Message>

            <ListPanel>
              <Filters onSubmit={e => e.preventDefault()}>
                <label htmlFor="filter">Filter:</label>
                <FilterInput id="filter" />
                <FilterButton type="submit">Search</FilterButton>
                <FilterButton type="button">Clear</FilterButton>
                <SelectGroup>
                  <SelectBox><Select aria-label="Template"><option>- Select Template -</option></Select><SelectArrow /></SelectBox>
                  <SelectBox><Select aria-label="Location"><option>- Select Location -</option></Select><SelectArrow /></SelectBox>
                </SelectGroup>
              </Filters>

              <Grid>
                <colgroup>
                  <col width="38" /><col /><col width="10%" /><col width="29.2%" /><col width="65" /><col width="66" /><col width="31" />
                </colgroup>
                <thead>
                  <tr>
                    <Head aria-label="Select" />
                    <Head><a href="#">Style</a></Head>
                    <Head><a href="#">Location</a></Head>
                    <Head><a href="#">Template<SortIcon /></a></Head>
                    <Head><a href="#">Default</a></Head>
                    <Head $plain>Assigned</Head>
                    <Head><a href="#">ID</a></Head>
                  </tr>
                </thead>
                <tbody>
                  {rows.map(r => (
                    <Row key={r.id}>
                      <Cell><Check type="checkbox" defaultChecked={r.checked} aria-label={r.style || r.template} /></Cell>
                      <Cell $left><StyleName><ThemeIcon />{r.style && <a href="#">{r.style}</a>}</StyleName></Cell>
                      <Cell>{r.place}</Cell>
                      <Cell $left $big><a href="#">{r.template}</a></Cell>
                      <Cell>{r.gold ? <GoldStar size={16} /> : <PaleStar />}</Cell>
                      <Cell>{r.assigned && <TickIcon />}</Cell>
                      <Cell>{r.id}</Cell>
                    </Row>
                  ))}
                  <Row><Cell /><Cell /><Cell /><Cell /><Cell /><Cell /><Cell /></Row>
                </tbody>
              </Grid>
            </ListPanel>
          </Frame>
        </Document>
        <Scrollbar><Thumb /></Scrollbar>
        <LinkHint>localhost/joomla25/administrator/index.php?option=com_templates&amp;view=styles#</LinkHint>
      </Viewport>

      <TaskBar>
        <TaskSide>
          <HideButton aria-label="Hide panel left"><Chevron d="M4.500 1 1.500 4l3 3" /></HideButton>
          <MenuButton><GearIcon />Menu</MenuButton>
          <Launcher aria-label="Files"><FilesIcon /></Launcher>
          <Launcher aria-label="Firefox"><FirefoxIcon /></Launcher>
          <Launcher aria-label="Notes"><NotesIcon /></Launcher>
          <Launcher aria-label="Screenshot"><CameraIcon /></Launcher>
          <Grip /><PanelLine />
          <Launcher aria-label="Terminal"><TerminalIcon /></Launcher>
        </TaskSide>
        <TaskSide>
          <Grip />
          <Tray>
            <ShieldIcon />
            <SpeakerIcon />
            <BatteryIcon />
            <Clock>Wed Mar 25, 08:57</Clock>
          </Tray>
          <PanelLine />
          <HideButton aria-label="Hide panel right"><Chevron d="m1.500 1 3 3-3 3" /></HideButton>
        </TaskSide>
      </TaskBar>
    </Desktop>
  );
}
